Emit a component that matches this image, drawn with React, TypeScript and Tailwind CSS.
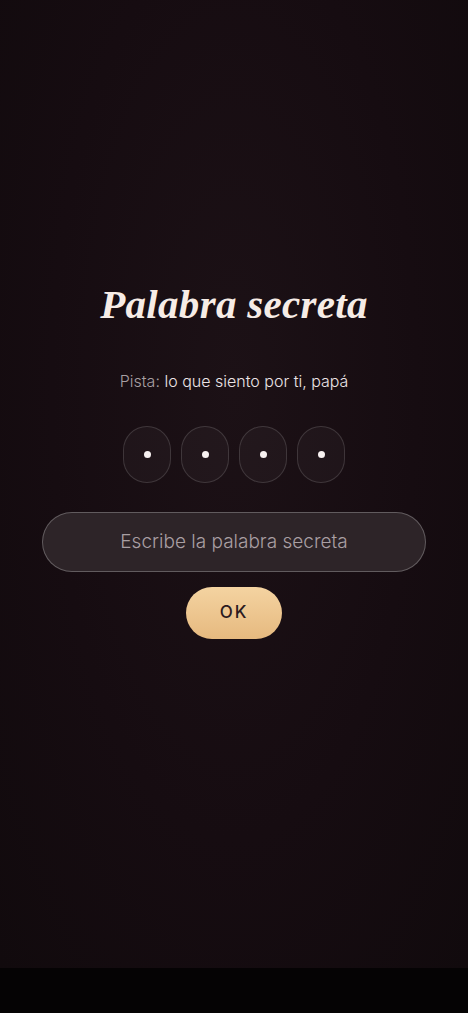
export default function App() {
  const slots = [0, 1, 2, 3]

  return (
    <div className="w-full min-h-[1013px] bg-[#050304] flex flex-col">
      <main
        className="h-[968px] flex flex-col items-center bg-[radial-gradient(ellipse_at_50%_40%,#1c1116_0%,#160c11_55%,#110a0d_100%)]"
        style={{ fontFamily: 'Inter, "Noto Sans", sans-serif' }}
      >
        {/* Title */}
        <h1
          className="mt-[280px] text-[41px] leading-[48px] italic font-bold text-[#f6ece6] tracking-[0.3px]"
          style={{ fontFamily: '"Liberation Serif", "DejaVu Serif", serif' }}
        >
          Palabra secreta
        </h1>

        {/* Hint */}
        <p className="mt-[42px] text-[16px] leading-[22px] font-light text-[#ece4e6]">
          <span className="text-[#a79fa2]">Pista:</span> lo que siento por ti, papá
        </p>

        {/* Letter slots */}
        <div className="mt-[34px] flex gap-[10px]">
          {slots.map((i) => (
            <div
              key={i}
              className="w-[48px] h-[57px] rounded-[24px] border border-[#ffffff24] bg-[#ffffff08] flex items-center justify-center"
            >
              <span className="w-[7px] h-[7px] rounded-full bg-[#f7f1f1]" />
            </div>
          ))}
        </div>

        {/* Input */}
        <div className="mt-[29px] w-[384px] h-[60px] rounded-full border border-[#ffffff40] bg-[#2d2428] flex items-center justify-center">
          <span className="text-[19px] font-light text-[#a99fa3]">Escribe la palabra secreta</span>
        </div>

        {/* Button */}
        <button className="mt-[15px] w-[96px] h-[52px] rounded-full bg-gradient-to-b from-[#f4d3a1] to-[#e6b97f] text-[17px] font-medium tracking-[2px] text-[#2b1a1f]">
          OK
        </button>
      </main>
    </div>
  )
}
